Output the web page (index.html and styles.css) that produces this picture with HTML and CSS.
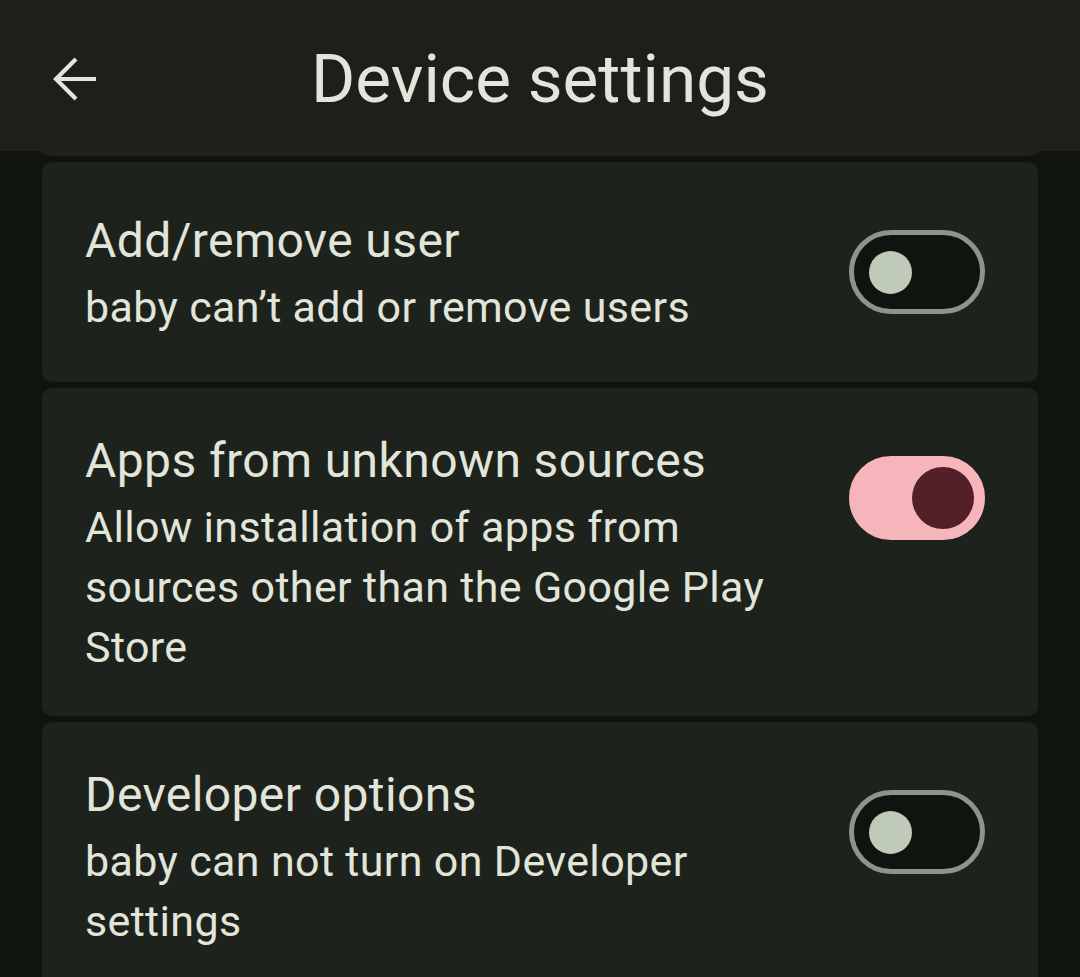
FILE: index.html
```html
<!DOCTYPE html>
<html lang="en">
<head>
  <meta charset="UTF-8">
  <meta name="viewport" content="width=device-width, initial-scale=1.0">
  <title>Device settings</title>
  <link rel="stylesheet" href="styles.css">
</head>
<body>
  <header class="app-bar">
    <button class="back-btn" aria-label="Back">
      <svg width="48" height="48" viewBox="0 0 48 48">
        <path d="M44 24H4M24 4L4 24L24 44" fill="none" stroke="currentColor" stroke-width="4.2"/>
      </svg>
    </button>
    <h1 class="app-title">Device settings</h1>
    <span></span>
  </header>

  <main class="settings-list">
    <div class="card card-partial"></div>

    <div class="card setting">
      <div class="setting-text">
        <div class="setting-title">Add/remove user</div>
        <div class="setting-desc">baby can’t add or remove users</div>
      </div>
      <span class="switch"><span class="thumb"></span></span>
    </div>

    <div class="card setting">
      <div class="setting-text">
        <div class="setting-title">Apps from unknown sources</div>
        <div class="setting-desc">Allow installation of apps from sources other than the Google Play Store</div>
      </div>
      <span class="switch on"><span class="thumb"></span></span>
    </div>

    <div class="card setting">
      <div class="setting-text">
        <div class="setting-title">Developer options</div>
        <div class="setting-desc">baby can not turn on Developer settings</div>
      </div>
      <span class="switch"><span class="thumb"></span></span>
    </div>
  </main>
</body>
</html>
```

FILE: styles.css
```css
html, body {
  margin: 0;
  height: 977px;
  overflow: hidden;
}
body {
  font-family: Roboto, "Noto Sans", Arial, sans-serif;
  background-color: #10140f;
  color: #e2e5da;
}
.app-bar {
  display: grid;
  grid-template-columns: 1fr auto 1fr;
  align-items: center;
  height: 151px;
  box-sizing: border-box;
  padding-top: 6px;
  background-color: #1e1f1a;
}
.back-btn {
  justify-self: start;
  margin-left: 52px;
  padding: 0;
  border: none;
  background: none;
  color: #e2e5da;
  display: flex;
}
.app-title {
  margin: 0;
  font-size: 67.5px;
  font-weight: 400;
  line-height: 1;
}
.settings-list {
  display: flex;
  flex-direction: column;
  gap: 6px;
  padding: 0 42px;
}
.card {
  background-color: #1e221c;
  border-radius: 10px;
}
.card-partial {
  height: 5px;
  border-radius: 0 0 10px 10px / 0 0 5px 5px;
}
.setting {
  display: flex;
  align-items: flex-start;
  justify-content: space-between;
  min-height: 220px;
  box-sizing: border-box;
  padding: 0 53px 0 43px;
}
.setting-text {
  align-self: center;
  width: 715px;
  padding: 37px 0 39px;
}
.setting-title {
  font-size: 48px;
  line-height: 72px;
  letter-spacing: 0.4px;
}
.setting-desc {
  font-size: 43px;
  line-height: 60px;
  letter-spacing: 0.35px;
}
.switch {
  flex: none;
  display: flex;
  align-items: center;
  width: 136px;
  height: 84px;
  margin-top: 68px;
  box-sizing: border-box;
  border: 5px solid #8d9587;
  border-radius: 42px;
  background-color: #10140f;
  padding-left: 15px;
}
.switch .thumb {
  width: 43px;
  height: 43px;
  border-radius: 50%;
  background-color: #c0cab9;
}
.switch.on {
  border-color: #f6b4bb;
  background-color: #f6b4bb;
  justify-content: flex-end;
  padding: 0 6px 0 0;
}
.switch.on .thumb {
  width: 62px;
  height: 62px;
  background-color: #531f29;
}
```
